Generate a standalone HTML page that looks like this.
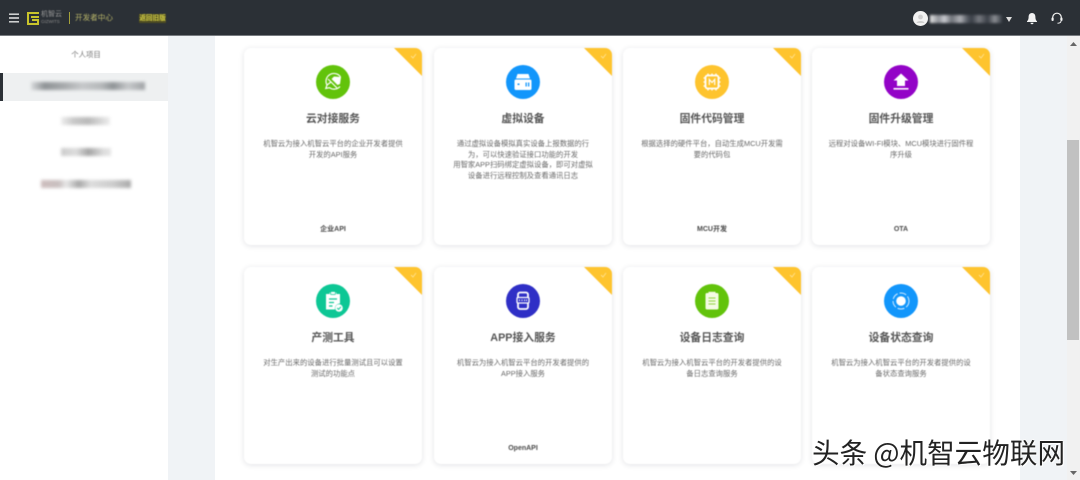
<!DOCTYPE html>
<html lang="zh-CN">
<head>
<meta charset="utf-8">
<title>机智云开发者中心</title>
<style>
html,body{margin:0;padding:0;width:1080px;height:480px;overflow:hidden;background:#f0f3f6;font-family:"Liberation Sans","Noto Sans CJK SC",sans-serif}
*{box-sizing:border-box}
.abs{position:absolute}
#main{position:absolute;left:215px;top:0;width:805px;height:480px;background:#fff}
#side{position:absolute;left:0;top:0;width:168px;height:480px;background:#fff}
#top{position:absolute;left:0;top:0;width:1080px;height:36px;background:#2b3036;border-bottom:1px solid #777b80}
.card{position:absolute;width:178px;height:197px;background:#fff;border-radius:7px;box-shadow:0 1px 6px rgba(40,50,70,.14);overflow:hidden;filter:blur(.45px)}
.tri{position:absolute;right:0;top:0;width:0;height:0;border-top:28px solid #fec42e;border-left:28px solid transparent}
.ck{position:absolute;right:5px;top:5px;opacity:.75}
.ic{position:absolute;left:72px;top:17px;width:34px;height:34px;border-radius:50%}
.ic svg{position:absolute;left:0;top:0;width:34px;height:34px}
.t{position:absolute;left:0;width:178px;top:63px;text-align:center;font-size:10.8px;line-height:16px;font-weight:700;color:#555;white-space:nowrap}
.d{position:absolute;left:0;width:178px;top:91px;text-align:center;font-size:7.35px;line-height:10.67px;color:#6a6a6a;white-space:nowrap}
.b{position:absolute;left:0;width:178px;top:176px;text-align:center;font-size:7px;line-height:10px;font-weight:700;color:#4a4a4a;white-space:nowrap;margin-top:1px}
.bl{position:absolute;filter:blur(1.6px);white-space:nowrap;color:#555;font-size:9px;line-height:12px}
</style>
</head>
<body>
<div id="side">
  <div class="abs" style="left:1px;top:49px;width:170px;text-align:center;font-size:7.4px;line-height:12px;color:#777;filter:blur(.4px)">个人项目</div>
  <div class="abs" style="left:0;top:73px;width:168px;height:28px;background:#eef0f1"></div>
  <div class="abs" style="left:0;top:73px;width:3px;height:28px;background:#2b3036"></div>
  <div class="bl" style="left:31px;top:82px;width:114px;height:8px;background:linear-gradient(90deg,#d8dadc,#8f9396 12%,#a9acae 30%,#c6c8ca 45%,#b5b8ba 62%,#8f9396 72%,#c6c8ca 85%,#a0a3a6);"></div>
  <div class="bl" style="left:61px;top:117px;width:49px;height:8px;background:linear-gradient(90deg,#eee,#c9c9c9 25%,#b9b9b9 55%,#d5d5d5 80%,#eee)"></div>
  <div class="bl" style="left:61px;top:148px;width:50px;height:8px;background:linear-gradient(90deg,#ccc,#ddd 30%,#a5a5a5 55%,#ddd 85%,#e5e5e5)"></div>
  <div class="bl" style="left:41px;top:180px;width:90px;height:8px;background:linear-gradient(90deg,#cdbdbd,#c9c0c0 20%,#e8e8e8 28%,#a8a8a8 42%,#ddd 55%,#ccc 80%,#aaa)"></div>
</div>
<div id="main"></div>

<div id="top">
  <svg class="abs" style="left:9px;top:13px" width="10" height="10" viewBox="0 0 10 10"><path d="M0 1.200h10M0 5h10M0 8.800h10" stroke="#e6e6e6" stroke-width="1.400"/></svg>
  <svg class="abs" style="left:27px;top:12px" width="12" height="13" viewBox="0 0 12 13" fill="none" stroke="#c9c42b" stroke-width="2"><path d="M12 1H1v11h10V8H5"/><path d="M4 5h8"/></svg>
  <div class="abs" style="left:41px;top:11px;font-size:7px;line-height:8px;color:#999;filter:blur(.5px)">机智云</div>
  <div class="abs" style="left:41px;top:19px;font-size:4.5px;line-height:6px;color:#888;filter:blur(.5px)">GIZWITS</div>
  <div class="abs" style="left:69px;top:12px;width:1px;height:12px;background:#a5a23a"></div>
  <div class="abs" style="left:75px;top:12px;font-size:7.6px;line-height:12px;color:#b9b66a;filter:blur(.4px)">开发者中心</div>
  <div class="abs" style="left:139px;top:13.500px;width:27px;height:9px;background:#4d4b22;font-size:6.600px;line-height:9px;font-weight:700;color:#d4cf45;text-align:center;filter:blur(.4px)">返回旧版</div>

  <div class="abs" style="left:913px;top:11px;width:15px;height:15px;border-radius:50%;background:#f2f2f2"></div>
  <svg class="abs" style="left:913px;top:11px" width="15" height="15" viewBox="0 0 15 15"><circle cx="7.500" cy="6" r="2.400" fill="#cfcfcf"/><path d="M3.500 12c.6-2.600 7.400-2.600 8 0z" fill="#cfcfcf"/></svg>
  <div class="bl" style="left:930px;top:15px;width:72px;height:8px;filter:blur(1.300px);background:linear-gradient(90deg,#e6e6e6,#8f9298 12%,#c9cbd0 20%,#6e7178 30%,#aeb0b5 42%,#555a62 52%,#3a3f47 58%,#777a80 68%,#3a3f47 80%,#8b8e93 90%,#3a3f47)"></div>
  <svg class="abs" style="left:1006px;top:17px" width="6" height="5" viewBox="0 0 6 5"><path d="M0 0h6L3 5z" fill="#ddd"/></svg>
  <svg class="abs" style="left:1026px;top:12px" width="12" height="13" viewBox="0 0 12 13"><path d="M6 1C3.600 1 2.600 2.900 2.600 5c0 2.400-.7 3.400-1.600 4.300v.7h10v-.7c-.9-.9-1.600-1.900-1.600-4.300C9.400 2.900 8.400 1 6 1z" fill="#f2f2f2"/><path d="M4.500 10.800h3a1.500 1.500 0 0 1-3 0z" fill="#f2f2f2"/></svg>
  <svg class="abs" style="left:1051px;top:12px" width="12" height="13" viewBox="0 0 12 13" fill="none"><path d="M1.700 7V5.500a4.300 4.300 0 0 1 8.600 0V7" stroke="#f2f2f2" stroke-width="1.200"/><rect x=".5" y="5.500" width="2.200" height="3.500" rx="1" fill="#f2f2f2"/><rect x="9.300" y="5.500" width="2.200" height="3.500" rx="1" fill="#f2f2f2"/><path d="M10 9c0 1.500-1.500 2.200-3.500 2.200" stroke="#f2f2f2"/></svg>
</div>

<!-- row 1 -->
<div class="card" style="left:244px;top:48px">
  <div class="tri"></div><svg class="ck" width="7" height="6" viewBox="0 0 7 6"><path d="M1 3l2 2 3-4" stroke="#ffe9a8" fill="none"/></svg>
  <div class="ic" style="background:#62c30b"><svg viewBox="0 0 34 34" fill="none" stroke="#fff" stroke-width="1.200"><path d="M24.500 12c-2-3.500-7-4.500-10.500-2.500-4 2.300-5 7-3 10.500l-1.200 3.500 3.700-.8c3.500 2.300 8 1.800 10.500-1.200"/><path d="M18 11.500l7 .5-1 7-2.500 1-6-6z" fill="#fff" stroke="none"/><path d="M12 14l9 9M11 20l4-3"/></svg></div>
  <div class="t">云对接服务</div>
  <div class="d">机智云为接入机智云平台的企业开发者提供<br>开发的API服务</div>
  <div class="b">企业API</div>
</div>
<div class="card" style="left:434px;top:48px">
  <div class="tri"></div><svg class="ck" width="7" height="6" viewBox="0 0 7 6"><path d="M1 3l2 2 3-4" stroke="#ffe9a8" fill="none"/></svg>
  <div class="ic" style="background:#1296fb"><svg viewBox="0 0 34 34"><path d="M11.500 9h11l1.500 4.500H10z" fill="#fff"/><rect x="8.500" y="14.500" width="17" height="10.500" rx="1.500" fill="#fff"/><rect x="11.500" y="18.500" width="2" height="1.500" fill="#1296fb"/><rect x="19.500" y="17.500" width="1.300" height="4" fill="#1296fb"/><rect x="22" y="17.500" width="1.300" height="4" fill="#1296fb"/></svg></div>
  <div class="t">虚拟设备</div>
  <div class="d">通过虚拟设备模拟真实设备上报数据的行<br>为，可以快速验证接口功能的开发<br>用智家APP扫码绑定虚拟设备，即可对虚拟<br>设备进行远程控制及查看通讯日志</div>
</div>
<div class="card" style="left:623px;top:48px">
  <div class="tri"></div><svg class="ck" width="7" height="6" viewBox="0 0 7 6"><path d="M1 3l2 2 3-4" stroke="#ffe9a8" fill="none"/></svg>
  <div class="ic" style="background:#fec42e"><svg viewBox="0 0 34 34" fill="none" stroke="#fff"><rect x="10.500" y="10.500" width="13" height="13" rx="2" stroke-width="1.800"/><path d="M13 8.500v2M17 8.500v2M21 8.500v2M13 23.500v2M17 23.500v2M21 23.500v2M8.500 13h2M8.500 17h2M8.500 21h2M23.500 13h2M23.500 17h2M23.500 21h2" stroke-width="1.300"/><path d="M14.300 20v-5.500l2.700 3 2.700-3V20" stroke-width="1.200"/></svg></div>
  <div class="t">固件代码管理</div>
  <div class="d">根据选择的硬件平台，自动生成MCU开发需<br>要的代码包</div>
  <div class="b">MCU开发</div>
</div>
<div class="card" style="left:812px;top:48px">
  <div class="tri"></div><svg class="ck" width="7" height="6" viewBox="0 0 7 6"><path d="M1 3l2 2 3-4" stroke="#ffe9a8" fill="none"/></svg>
  <div class="ic" style="background:#9303c7"><svg viewBox="0 0 34 34"><path d="M17 8.500l7.500 7H21v5.500h-8v-5.500H9.500z" fill="#fff"/><rect x="9.500" y="23" width="15" height="1.600" fill="#fff"/></svg></div>
  <div class="t">固件升级管理</div>
  <div class="d">远程对设备WI-FI模块、MCU模块进行固件程<br>序升级</div>
  <div class="b">OTA</div>
</div>

<!-- row 2 -->
<div class="card" style="left:244px;top:267px">
  <div class="tri"></div><svg class="ck" width="7" height="6" viewBox="0 0 7 6"><path d="M1 3l2 2 3-4" stroke="#ffe9a8" fill="none"/></svg>
  <div class="ic" style="background:#0dc795"><svg viewBox="0 0 34 34"><path d="M10 10h3.500V8.500h7V10H24v9.500a5 5 0 0 0-5 6h-9z" fill="#fff"/><rect x="14.500" y="7.500" width="5" height="3" rx="1" fill="#fff" stroke="#0dc795" stroke-width=".8"/><path d="M13 15h8M13 18.500h5M13 22h3.500" stroke="#0dc795" stroke-width="1.300"/><circle cx="23" cy="24" r="3.800" fill="#fff"/><path d="M21.200 24l1.400 1.400 2.300-2.600" stroke="#0dc795" fill="none"/></svg></div>
  <div class="t">产测工具</div>
  <div class="d">对生产出来的设备进行批量测试且可以设置<br>测试的功能点</div>
</div>
<div class="card" style="left:434px;top:267px">
  <div class="tri"></div><svg class="ck" width="7" height="6" viewBox="0 0 7 6"><path d="M1 3l2 2 3-4" stroke="#ffe9a8" fill="none"/></svg>
  <div class="ic" style="background:#2f2fc6"><svg viewBox="0 0 34 34" fill="none" stroke="#fff"><path d="M12 14V10.500a2 2 0 0 1 2-2h6a2 2 0 0 1 2 2V14" stroke-width="1.800"/><rect x="11" y="13.500" width="12" height="5.500" rx="1" stroke-width="1.300"/><path d="M12 19v4a2 2 0 0 0 2 2h6a2 2 0 0 0 2-2v-4" stroke-width="1.800"/><path d="M13.500 15.500v1.500M16 15.500v1.500M18.500 15.500v1.500M20.500 15.500v1.500" stroke-width="1"/></svg></div>
  <div class="t">APP接入服务</div>
  <div class="d">机智云为接入机智云平台的开发者提供的<br>APP接入服务</div>
  <div class="b">OpenAPI</div>
</div>
<div class="card" style="left:623px;top:267px">
  <div class="tri"></div><svg class="ck" width="7" height="6" viewBox="0 0 7 6"><path d="M1 3l2 2 3-4" stroke="#ffe9a8" fill="none"/></svg>
  <div class="ic" style="background:#62c30b"><svg viewBox="0 0 34 34"><rect x="10.500" y="9" width="13" height="16.500" rx="1.500" fill="#f4fbe4"/><rect x="13.500" y="7.800" width="7" height="2.500" fill="#f4fbe4"/><path d="M13.500 14h7M13.500 17h7M13.500 20h7" stroke="#8fd43e" stroke-width="1"/></svg></div>
  <div class="t">设备日志查询</div>
  <div class="d">机智云为接入机智云平台的开发者提供的设<br>备日志查询服务</div>
</div>
<div class="card" style="left:812px;top:267px">
  <div class="tri"></div><svg class="ck" width="7" height="6" viewBox="0 0 7 6"><path d="M1 3l2 2 3-4" stroke="#ffe9a8" fill="none"/></svg>
  <div class="ic" style="background:#1296fb"><svg viewBox="0 0 34 34" fill="none"><circle cx="17" cy="17" r="4.800" fill="#fff"/><circle cx="17" cy="17" r="8" stroke="#cfe9ff" stroke-width="1" stroke-dasharray="7 2"/></svg></div>
  <div class="t">设备状态查询</div>
  <div class="d">机智云为接入机智云平台的开发者提供的设<br>备状态查询服务</div>
</div>

<!-- scrollbar -->
<div class="abs" style="left:1067px;top:36px;width:13px;height:444px;background:#f1f1f1"></div>
<div class="abs" style="left:1067px;top:140px;width:12px;height:200px;background:#c1c1c1"></div>
<svg class="abs" style="left:1070px;top:42px" width="7" height="4" viewBox="0 0 7 4"><path d="M3.500 0L7 4H0z" fill="#666"/></svg>
<svg class="abs" style="left:1070px;top:471px" width="7" height="4" viewBox="0 0 7 4"><path d="M0 0h7L3.500 4z" fill="#666"/></svg>

<!-- watermark -->
<div class="abs" style="left:812px;top:432px;font-size:27.600px;line-height:38px;color:#222;white-space:nowrap;text-shadow:1px 1px 0 #fff,-1px 0 0 #fff,0 -1px 0 #fff;font-family:'Noto Sans CJK SC','WenQuanYi Zen Hei',sans-serif;font-weight:400">头条 @机智云物联网</div>
</body>
</html>
